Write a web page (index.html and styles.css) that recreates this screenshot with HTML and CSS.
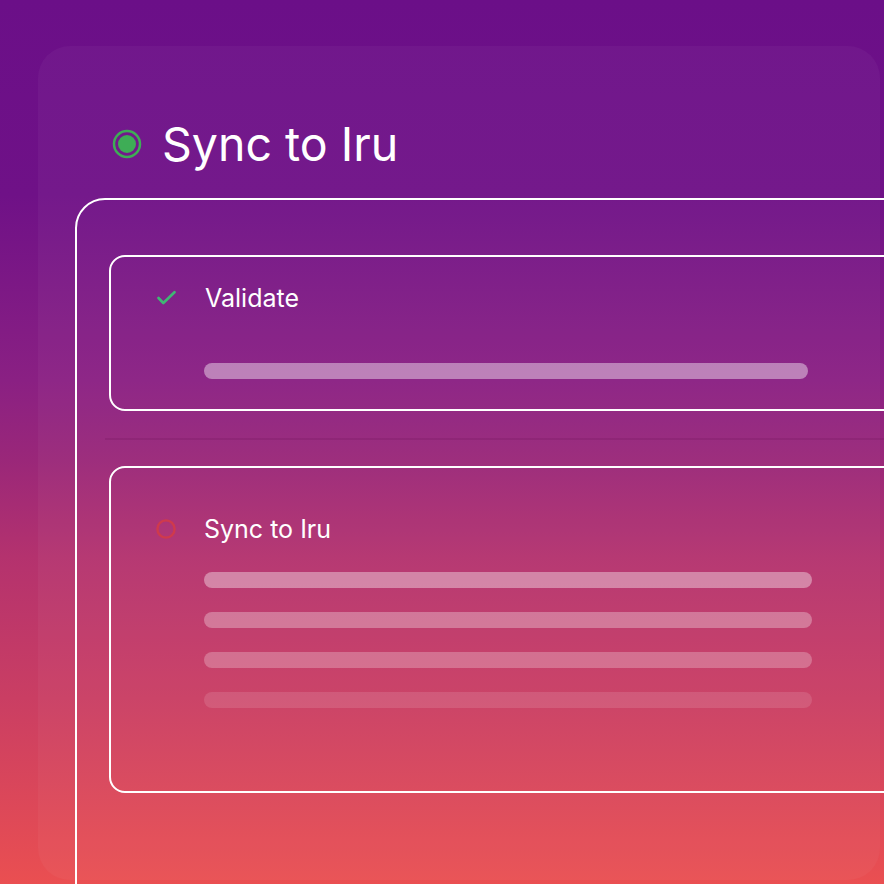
FILE: index.html
```html
<!DOCTYPE html>
<html lang="en">
<head>
<meta charset="utf-8">
<title>Sync to Iru</title>
<link rel="stylesheet" href="styles.css">
</head>
<body>
<div class="stage">
  <div class="shell">
    <header class="head">
      <svg class="status-dot" width="30" height="30" viewBox="0 0 30 30" aria-hidden="true">
        <circle cx="15" cy="15" r="13" fill="none" stroke="#3ead56" stroke-width="2.5"/>
        <circle cx="15" cy="15" r="9" fill="#3ead56"/>
      </svg>
      <h1 class="title">Sync to Iru</h1>
    </header>
    <section class="board">
      <div class="step step-done">
        <div class="step-row">
          <span class="step-icon">
            <svg width="20" height="20" viewBox="0 0 20 20" aria-hidden="true">
              <path d="M2.5 10 L7.3 15 L18.5 4.2" fill="none" stroke="#3fb774" stroke-width="2.6" stroke-linecap="round" stroke-linejoin="round"/>
            </svg>
          </span>
          <span class="step-name">Validate</span>
        </div>
        <div class="lines lines-short">
          <div class="line l1"></div>
        </div>
      </div>
      <div class="divider"></div>
      <div class="step step-pending">
        <div class="step-row">
          <span class="step-icon">
            <svg width="20" height="20" viewBox="0 0 20 20" aria-hidden="true">
              <circle cx="10" cy="10" r="8.6" fill="none" stroke="#cf3a4c" stroke-width="2.4"/>
            </svg>
          </span>
          <span class="step-name">Sync to Iru</span>
        </div>
        <div class="lines">
          <div class="line l1"></div>
          <div class="line l2"></div>
          <div class="line l3"></div>
          <div class="line l4"></div>
        </div>
      </div>
    </section>
  </div>
</div>
</body>
</html>
```
FILE: styles.css
```css
* { box-sizing: border-box; }
html, body { margin: 0; padding: 0; }
body { font-family: Inter, "Liberation Sans", Arial, sans-serif; color: #fff; }

.stage {
  width: 884px;
  height: 884px;
  overflow: hidden;
  padding: 46px 0 0 38px;
  background: linear-gradient(180deg,
    #6b0f88 0%,
    #6f1187 22%,
    #8a2083 43%,
    #9a2779 52%,
    #b4326e 63%,
    #ca3e63 79%,
    #ea4f51 100%);
}

.shell {
  width: 842px;
  height: 834px;
  border-radius: 32px;
  background: rgba(255, 255, 255, 0.035);
  padding: 68px 0 0 75px;
}

.head {
  display: flex;
  align-items: center;
  gap: 20px;
  height: 60px;
}
.status-dot { display: block; flex: none; margin-left: -1px; }
.title {
  margin: 0;
  font-size: 46.5px;
  font-weight: 400;
  letter-spacing: 0;
  line-height: 60px;
}

.board {
  margin: 24px 0 0 -38px;
  width: 900px;
  height: 760px;
  border: 2px solid #fff;
  border-radius: 30px;
  padding: 55px 0 0 32px;
}

.step {
  border: 2px solid #fff;
  border-radius: 16px;
  width: 860px;
  padding-left: 45px;
}
.step-done { padding-top: 26px; padding-bottom: 30px; }
.step-pending { padding-top: 46px; padding-bottom: 83px; }

.step-row {
  display: flex;
  align-items: center;
  height: 30px;
  gap: 28px;
}
.step-icon { width: 20px; height: 20px; flex: none; display: block; }
.step-icon svg { display: block; }
.step-name { font-size: 25px; line-height: 30px; }
.step-done .step-name { margin-left: 1px; }

.lines {
  margin: 28px 0 0 48px;
  width: 608px;
  display: flex;
  flex-direction: column;
  gap: 24px;
}
.lines-short { margin-top: 50px; width: 604px; }
.line { height: 16px; border-radius: 8px; }
.step-done .l1 { background: rgba(255, 255, 255, 0.42); }
.step-pending .l1 { background: rgba(255, 255, 255, 0.38); }
.l2 { background: rgba(255, 255, 255, 0.3); }
.l3 { background: rgba(255, 255, 255, 0.25); }
.l4 { background: rgba(255, 255, 255, 0.12); }

.divider {
  height: 2px;
  margin: 27px 0 26px -4px;
  background: rgba(70, 0, 60, 0.12);
}
```
